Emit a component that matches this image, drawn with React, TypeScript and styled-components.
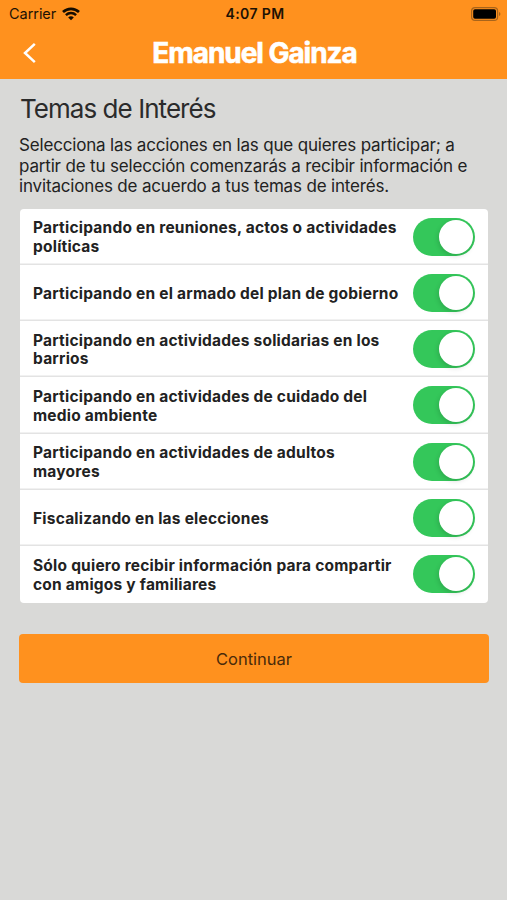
import React, { useState } from "react";
import styled, { createGlobalStyle } from "styled-components";

const GlobalStyle = createGlobalStyle`
  * { box-sizing: border-box; }
  html, body, #root { height: 100%; }
  body {
    margin: 0;
    background: #d9d9d7;
    color: #222;
    font-family: Inter, "Liberation Sans", sans-serif;
  }
`;

const Screen = styled.div`
  display: flex;
  flex-direction: column;
  min-height: 900px;
  overflow: hidden;
`;

const Header = styled.header`
  height: 79px;
  background: #ff911e;
`;

const StatusBar = styled.div`
  display: grid;
  grid-template-columns: 1fr auto 1fr;
  align-items: center;
  height: 27px;
  padding: 0 6px 0 9px;
  color: #1d1204;
`;

const Carrier = styled.div`
  display: flex;
  align-items: center;
  gap: 6px;
  font-size: 14.5px;
  letter-spacing: -0.05px;
`;

const Clock = styled.div`
  font-size: 14px;
  font-weight: 600;
  letter-spacing: 0.4px;
`;

const BatterySlot = styled.div`
  display: flex;
  justify-content: flex-end;
`;

const NavBar = styled.nav`
  display: grid;
  grid-template-columns: 60px 1fr 60px;
  align-items: center;
  height: 52px;
`;

const BackButton = styled.button`
  display: flex;
  align-items: center;
  width: 60px;
  height: 44px;
  padding: 0 0 0 22px;
  border: 0;
  background: none;
`;

const Brand = styled.h1`
  margin: 0;
  color: #fff;
  font-size: 28px;
  line-height: 52px;
  font-weight: 700;
  letter-spacing: -1.05px;
  text-align: center;
  white-space: nowrap;
  padding-left: 2px;
  -webkit-text-stroke: 0.6px #fff;
`;

const Content = styled.main`
  padding: 13px 18px 0 19px;
`;

const Title = styled.h2`
  margin: 0 0 9px;
  padding-left: 1px;
  font-size: 26px;
  line-height: 34px;
  font-weight: 400;
  letter-spacing: -0.95px;
  color: #2b2b2b;
`;

const Intro = styled.p`
  margin: 0;
  font-size: 17px;
  line-height: 20.6px;
  letter-spacing: -0.17px;
  white-space: pre-line;
`;

const TopicList = styled.ul`
  margin: 12px 1.5px 0 1px;
  padding: 0;
  list-style: none;
  border-radius: 4px;
  background: #fff;
  overflow: hidden;
`;

const Topic = styled.li`
  display: flex;
  align-items: center;
  justify-content: space-between;
  height: 56.2px;
  padding: 1px 12.5px 0 13px;
  box-shadow: inset 0 -1.5px 0 #e3e3e3;
  &:last-child { height: 57px; box-shadow: none; }
`;

const TopicLabel = styled.span`
  padding-top: 1.4px;
  font-size: 15.5px;
  line-height: 18.7px;
  font-weight: 700;
  letter-spacing: 0.22px;
  white-space: pre;
`;

const Switch = styled.button<{ $on: boolean }>`
  display: flex;
  flex: none;
  justify-content: ${(p) => (p.$on ? "flex-end" : "flex-start")};
  width: 62px;
  height: 38px;
  margin-bottom: 1px;
  padding: 2px;
  border: 0;
  border-radius: 19px;
  background: ${(p) => (p.$on ? "#34c75a" : "#e5e5e5")};
`;

const Knob = styled.span`
  width: 34px;
  height: 34px;
  border-radius: 50%;
  background: #fff;
  box-shadow: -1px 2px 5px rgba(0, 0, 0, 0.14);
`;

const Continue = styled.button`
  display: block;
  width: 470px;
  height: 49px;
  margin-top: 31.5px;
  padding: 0;
  border: 0;
  border-radius: 4px;
  background: #ff911e;
  color: #4a2b0b;
  font: inherit;
  font-size: 16.5px;
`;

const topics = [
  "Participando en reuniones, actos o actividades\npolíticas",
  "Participando en el armado del plan de gobierno",
  "Participando en actividades solidarias en los\nbarrios",
  "Participando en actividades de cuidado del\nmedio ambiente",
  "Participando en actividades de adultos\nmayores",
  "Fiscalizando en las elecciones",
  "Sólo quiero recibir información para compartir\ncon amigos y familiares",
];

const WifiIcon = () => (
  <svg width="18" height="14" viewBox="0 0 18 14" fill="none" stroke="#150c00">
    <path d="M1 5.1C5.5.9 12.5.9 17 5.1" strokeWidth="2.7" />
    <path d="M3.9 8.1c2.9-2.7 7.3-2.7 10.2 0" strokeWidth="2.5" />
    <path d="M9 13.2 6.2 10.4c1.6-1.5 4-1.5 5.6 0Z" fill="#150c00" stroke="none" />
  </svg>
);

const BatteryIcon = () => (
  <svg width="30" height="14" viewBox="0 0 30 14">
    <rect x="0.6" y="0.6" width="26" height="12.8" rx="3.5" fill="none" stroke="#a8641b" strokeWidth="1.2" />
    <rect x="2.2" y="2.2" width="22.8" height="9.6" rx="1.8" fill="#000" />
    <path d="M28 5v4c1.9-.7 1.9-3.3 0-4Z" fill="#a8641b" />
  </svg>
);

const BackIcon = () => (
  <svg width="15" height="22" viewBox="0 0 15 22" fill="none" stroke="#fff" strokeWidth="2.5">
    <path d="M12.8 1.8 3 11l9.8 9.2" />
  </svg>
);

export default function App() {
  const [enabled, setEnabled] = useState(topics.map(() => true));
  const toggle = (index: number) =>
    setEnabled((all) => all.map((on, i) => (i === index ? !on : on)));

  return (
    <Screen>
      <GlobalStyle />
      <Header>
        <StatusBar>
          <Carrier>Carrier <WifiIcon /></Carrier>
          <Clock>4:07 PM</Clock>
          <BatterySlot><BatteryIcon /></BatterySlot>
        </StatusBar>
        <NavBar>
          <BackButton aria-label="Volver"><BackIcon /></BackButton>
          <Brand>Emanuel Gainza</Brand>
        </NavBar>
      </Header>
      <Content>
        <Title>Temas de Interés</Title>
        <Intro>{"Selecciona las acciones en las que quieres participar; a\npartir de tu selección comenzarás a recibir información e\ninvitaciones de acuerdo a tus temas de interés."}</Intro>
        <TopicList>
          {topics.map((topic, i) => (
            <Topic key={topic}>
              <TopicLabel>{topic}</TopicLabel>
              <Switch $on={enabled[i]} role="switch" aria-checked={enabled[i]} aria-label={topic} onClick={() => toggle(i)}>
                <Knob />
              </Switch>
            </Topic>
          ))}
        </TopicList>
        <Continue>Continuar</Continue>
      </Content>
    </Screen>
  );
}
